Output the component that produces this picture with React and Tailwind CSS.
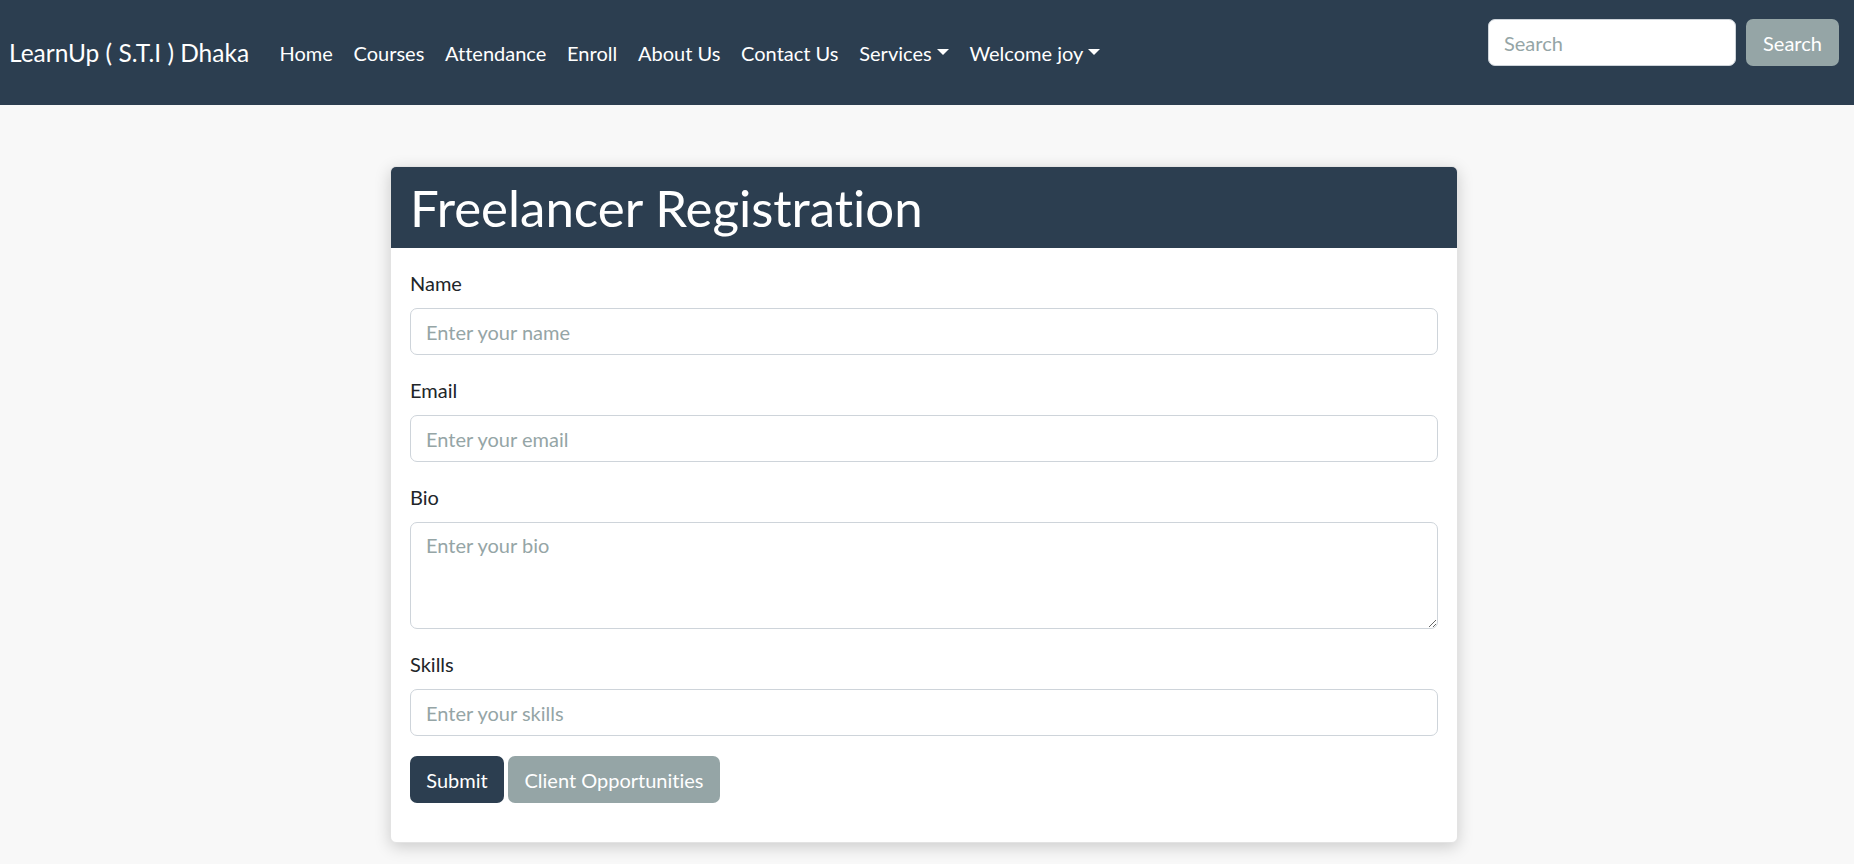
import { useState } from "react";

const links = ["Home", "Courses", "Attendance", "Enroll", "About Us", "Contact Us"];

const Caret = () => (
  <span className="ml-[0.255em] inline-block h-0 w-0 border-x-[0.3em] border-t-[0.3em] border-x-transparent border-t-white align-[0.255em]" />
);

const Field = ({ label, placeholder, value, onChange, textarea }) => (
  <div className="mb-[20px]">
    <label className="mb-[10px] block leading-[30px] text-[#212529]">{label}</label>
    {textarea ? (
      <textarea
        rows={3}
        placeholder={placeholder}
        value={value}
        onChange={onChange}
        className="block h-[107px] w-full rounded-[7px] border border-[#ced4da] bg-white px-[15px] py-[7px] leading-[30px] text-[#212529] placeholder:text-[#95a5a6] focus:outline-none"
      />
    ) : (
      <input
        type="text"
        placeholder={placeholder}
        value={value}
        onChange={onChange}
        className="block h-[47px] w-full rounded-[7px] border border-[#ced4da] bg-white px-[15px] text-[#212529] placeholder:text-[#95a5a6] focus:outline-none"
      />
    )}
  </div>
);

export default function App() {
  const [name, setName] = useState("");
  const [email, setEmail] = useState("");
  const [bio, setBio] = useState("");
  const [skills, setSkills] = useState("");
  const [query, setQuery] = useState("");

  return (
    <div className="min-h-[864px] bg-[#f8f8f8] text-[20px] font-['Lato','Liberation_Sans',sans-serif] [font-variant-ligatures:no-common-ligatures]">
      <nav className="flex h-[105px] items-start justify-between bg-[#2c3e50] pl-[9px] pr-[15px] text-white">
        <div className="flex h-full items-center">
          <a href="#" className="mr-[20px] text-[24.5px] leading-[36px]">LearnUp ( S.T.I ) Dhaka</a>
          <ul className="flex items-center">
            {links.map((l) => (
              <li key={l}>
                <a href="#" className="block px-[10.4px] leading-[30px]">{l}</a>
              </li>
            ))}
            <li>
              <a href="#" className="block px-[10.4px] leading-[30px]">Services<Caret /></a>
            </li>
            <li>
              <a href="#" className="block px-[10.4px] leading-[30px]">Welcome joy<Caret /></a>
            </li>
          </ul>
        </div>
        <form className="mt-[19px] flex gap-[10px]" onSubmit={(e) => e.preventDefault()}>
          <input
            type="text"
            placeholder="Search"
            value={query}
            onChange={(e) => setQuery(e.target.value)}
            className="h-[47px] w-[248px] rounded-[7px] border border-[#ced4da] bg-white px-[15px] text-[#212529] placeholder:text-[#95a5a6] focus:outline-none"
          />
          <button type="submit" className="h-[47px] w-[93px] rounded-[7px] bg-[#95a5a6] text-white">Search</button>
        </form>
      </nav>

      <div className="ml-[390px] w-[1068px] pt-[61px]">
        <div className="overflow-hidden rounded-[6px] border border-[#e3e3e3] bg-white shadow-[0_4px_16px_rgba(0,0,0,0.18)]">
          <div className="flex h-[81px] items-center bg-[#2c3e50] px-[19px]">
            <h1 className="text-[51px] leading-[60px] text-white">Freelancer Registration</h1>
          </div>
          <form className="px-[19px] pb-[39px] pt-[20px]" onSubmit={(e) => e.preventDefault()}>
            <Field label="Name" placeholder="Enter your name" value={name} onChange={(e) => setName(e.target.value)} />
            <Field label="Email" placeholder="Enter your email" value={email} onChange={(e) => setEmail(e.target.value)} />
            <Field label="Bio" placeholder="Enter your bio" value={bio} onChange={(e) => setBio(e.target.value)} textarea />
            <Field label="Skills" placeholder="Enter your skills" value={skills} onChange={(e) => setSkills(e.target.value)} />
            <div className="flex gap-[4px]">
              <button type="submit" className="h-[47px] w-[94px] rounded-[7px] bg-[#2c3e50] text-white">Submit</button>
              <button type="button" className="h-[47px] w-[212px] rounded-[7px] bg-[#95a5a6] text-white">Client Opportunities</button>
            </div>
          </form>
        </div>
      </div>
    </div>
  );
}
